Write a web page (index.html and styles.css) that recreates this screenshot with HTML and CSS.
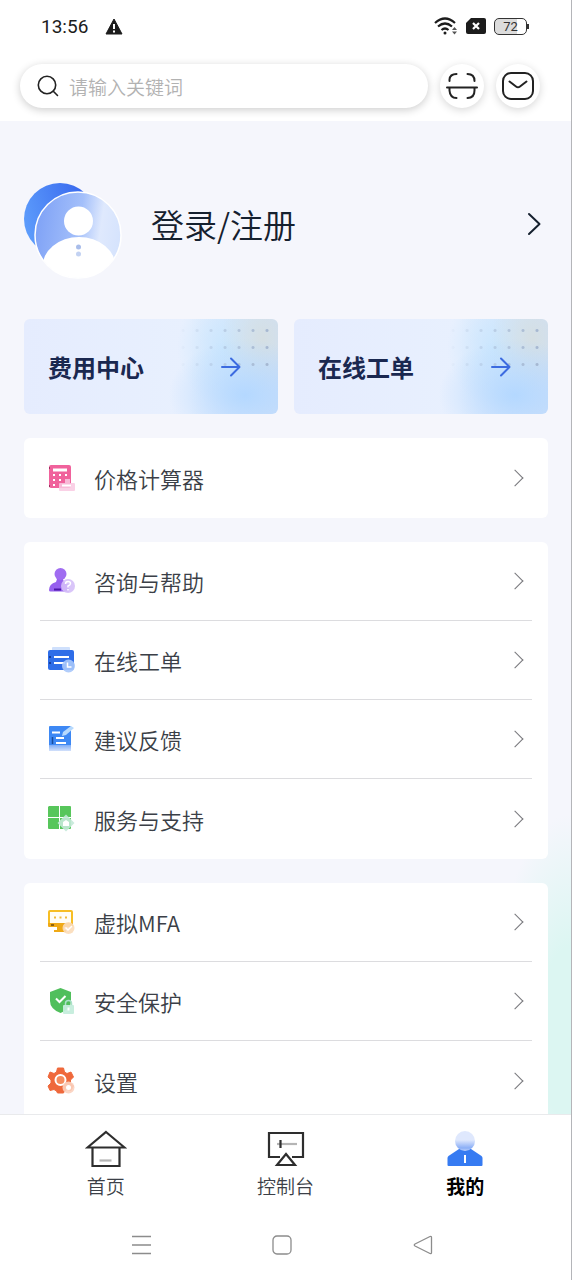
FILE: index.html
```html
<!DOCTYPE html>
<html lang="zh-CN">
<head>
    <meta charset="UTF-8">
    <meta name="viewport" content="width=device-width, initial-scale=1.0">
    <title>我的</title>
    <link rel="stylesheet" href="styles.css">
</head>
<body>
    <header class="header">
        <div class="status-bar">
            <span class="time">13:56</span>
            <svg class="warning" width="18" height="17" viewBox="0 0 18 17">
                <path d="M9 1L17 16H1z" fill="#1c1c1c" stroke="#1c1c1c" stroke-linejoin="round"/>
                <path d="M9 6v5M9 12.500v2" stroke="#fff" stroke-width="2"/>
            </svg>
            <div class="status-icons">
                <svg width="24" height="18" viewBox="0 0 24 18" fill="none" stroke="#1c1c1c" stroke-width="2.200">
                    <path d="M1 6Q11 -3 21 6M4 9.500Q11 3.500 18 9.500M7.500 13Q11 10 14.500 13"/>
                    <circle cx="11" cy="16" r="1.500" fill="#1c1c1c" stroke="none"/>
                    <path d="M18 13l2.500-3 2.500 3zM18 14.500l2.500 3 2.500-3z" fill="#555" stroke="none"/>
                </svg>
                <svg width="20" height="16" viewBox="0 0 20 16">
                    <path d="M5 0h13q2 0 2 2v12q0 2-2 2H2q-2 0-2-2V5z" fill="#1c1c1c"/>
                    <path d="M7 5l6 6M13 5l-6 6" stroke="#fff" stroke-width="2.200"/>
                </svg>
                <div class="battery">72</div>
            </div>
        </div>
        <div class="search-bar">
            <label class="search">
                <svg width="22" height="22" viewBox="0 0 22 22" fill="none" stroke="#222" stroke-width="1.600" stroke-linecap="round">
                    <circle cx="10" cy="10" r="8.700"/>
                    <path d="M16.300 16.300L20.500 20.500"/>
                </svg>
                <input type="text" placeholder="请输入关键词" aria-label="搜索">
            </label>
            <button class="round-btn" aria-label="扫一扫">
                <svg width="32" height="32" viewBox="0 0 32 32" fill="none" stroke="#222" stroke-width="2" stroke-linecap="round">
                    <path d="M1 17.500h30M3.500 11V9.500Q4 4 10.500 4M21.500 4Q28.500 4 28.500 11M3.500 18v2.500Q4 28 10.500 28M21.500 28Q28.500 28 28.500 20.500V18"/>
                </svg>
            </button>
            <button class="round-btn" aria-label="消息">
                <svg width="32" height="32" viewBox="0 0 32 32" fill="none" stroke="#222" stroke-width="2" stroke-linecap="round" stroke-linejoin="round">
                    <rect x="1" y="3" width="30" height="26" rx="8"/>
                    <path d="M7.500 11.500l6.500 5q2 1.500 4 0l6.500-5"/>
                </svg>
            </button>
        </div>
    </header>

    <main class="content">
        <a class="profile" href="#">
            <svg width="100" height="98" viewBox="0 0 100 98">
                <defs>
                    <linearGradient id="back" x1="0" y1="0.500" x2="1" y2="0.200">
                        <stop offset="0" stop-color="#5c9bfb"/>
                        <stop offset="1" stop-color="#3361ec"/>
                    </linearGradient>
                    <linearGradient id="face" x1="0" y1="0.400" x2="1" y2="0.550">
                        <stop offset="0" stop-color="#7fa2f6"/>
                        <stop offset="0.500" stop-color="#a3bffa"/>
                        <stop offset="0.750" stop-color="#dfe9fd"/>
                        <stop offset="1" stop-color="#d5e3fd"/>
                    </linearGradient>
                    <clipPath id="round"><circle cx="54" cy="53" r="43"/></clipPath>
                </defs>
                <circle cx="36" cy="37" r="36" fill="url(#back)"/>
                <circle cx="54" cy="53" r="43" fill="url(#face)"/>
                <ellipse cx="55" cy="86" rx="37" ry="31" fill="#fff" clip-path="url(#round)"/>
                <circle cx="54" cy="53" r="43" fill="none" stroke="#fff" stroke-width="1.500"/>
                <circle cx="54.500" cy="39" r="14.500" fill="#fff"/>
                <circle cx="54.500" cy="65" r="2.500" fill="#a9bdea"/>
                <circle cx="54.500" cy="72" r="2.500" fill="#c3d2f2"/>
            </svg>
            <div class="profile-text">
                <span>登录/注册</span>
                <svg width="14" height="24" viewBox="0 0 14 24" fill="none" stroke="#15202e" stroke-width="2" stroke-linecap="round" stroke-linejoin="round">
                    <path d="M2 2l10.500 10L2 22"/>
                </svg>
            </div>
        </a>

        <div class="promos">
            <a class="promo" href="#">
                <span>费用中心</span>
                <svg width="20" height="20" viewBox="0 0 20 20" fill="none" stroke="#3c6be0" stroke-width="2" stroke-linecap="round" stroke-linejoin="round">
                    <path d="M1 10h17M10 1.500l8.500 8.500-8.500 8.500"/>
                </svg>
            </a>
            <a class="promo" href="#">
                <span>在线工单</span>
                <svg width="20" height="20" viewBox="0 0 20 20" fill="none" stroke="#3c6be0" stroke-width="2" stroke-linecap="round" stroke-linejoin="round">
                    <path d="M1 10h17M10 1.500l8.500 8.500-8.500 8.500"/>
                </svg>
            </a>
        </div>

        <div class="card">
            <a class="row" href="#">
                <svg width="28" height="28" viewBox="0 0 28 28">
                    <rect x="2" y="1" width="22" height="23" rx="2" fill="#f0629c"/>
                    <path d="M6 6h14" stroke="#fff" stroke-width="3"/>
                    <path d="M6 11h2M12 11h2M18 11h2M6 16h2M12 16h2M6 21h2" stroke="#fff" stroke-width="2"/>
                    <path d="M2.500 3v2M2.500 21v2" stroke="#9e2f60"/>
                    <path d="M18 15h5v4h4q1 0 1 1v6q0 1-1 1H13q-1 0-1-1v-6q0-1 1-1h5z" fill="#f9c9e2" fill-opacity="0.850"/>
                    <path d="M15 21.500h9" stroke="#fff" stroke-width="2"/>
                </svg>
                <span>价格计算器</span>
                <i class="arrow"></i>
            </a>
        </div>

        <div class="card">
            <a class="row" href="#">
                <svg width="28" height="28" viewBox="0 0 28 28">
                    <path d="M10 12L9 15Q2 17 2 23q0 1.500 1.500 1.500H22V18l-5-3-1-3z" fill="#9660ee"/>
                    <circle cx="13.500" cy="7" r="6" fill="#a06cf1"/>
                    <path d="M7 22.500h7" stroke="#4c16a8" stroke-width="2"/>
                    <circle cx="21" cy="19" r="7" fill="#d5bff8" fill-opacity="0.900"/>
                    <path d="M18.500 17q0-2.500 2.500-2.500t2.500 2q0 1.500-2.500 2.500v1.500M21 22v1.500" fill="none" stroke="#fff" stroke-width="1.500"/>
                </svg>
                <span>咨询与帮助</span>
                <i class="arrow"></i>
            </a>
            <a class="row" href="#">
                <svg width="28" height="28" viewBox="0 0 28 28">
                    <rect x="5" y="1" width="18" height="6" rx="1" fill="#cfe0fc"/>
                    <rect x="1" y="4" width="26" height="20" rx="2" fill="#2e6de8"/>
                    <path d="M7 11h15M7 17h11" stroke="#fff" stroke-width="2"/>
                    <path d="M2 11h2M2 17h2" stroke="#173f9b" stroke-width="2"/>
                    <circle cx="21.500" cy="20" r="6.500" fill="#a9c8fb" fill-opacity="0.900"/>
                    <path d="M20.500 16.500V21h4" fill="none" stroke="#fff" stroke-width="1.500"/>
                </svg>
                <span>在线工单</span>
                <i class="arrow"></i>
            </a>
            <a class="row" href="#">
                <svg width="28" height="28" viewBox="0 0 28 28">
                    <defs>
                        <linearGradient id="fade" x1="0" y1="0" x2="0" y2="1">
                            <stop offset="0" stop-color="#7fadf6"/>
                            <stop offset="1" stop-color="#d3e1fb"/>
                        </linearGradient>
                    </defs>
                    <rect x="2" y="1" width="22" height="21" rx="1" fill="#3d88f4"/>
                    <path d="M2 20h22v6H2z" fill="url(#fade)"/>
                    <path d="M5 7.500h8M9 13h8M9 18h10" stroke="#fff" stroke-width="2"/>
                    <path d="M5.500 12v7" stroke="#174c9f" stroke-width="1.500"/>
                    <path d="M15 11l1-4 8-6 3 2-8 7z" fill="#b6d9fd"/>
                </svg>
                <span>建议反馈</span>
                <i class="arrow"></i>
            </a>
            <a class="row" href="#">
                <svg width="28" height="28" viewBox="0 0 28 28">
                    <path d="M2 1h10v11H1V2zM13 1h10q1 0 1 1v10H13zM1 13h11v11H2q-1 0-1-1zM13 13h11v10q0 1-1 1H13z" fill="#57c65b"/>
                    <path d="M19 9.500l8.500 8.500-8.500 8.500L10.500 18z" fill="#c4e9d8" fill-opacity="0.900"/>
                    <path d="M16 21v-4l3-2 3 2v4z" fill="#fff"/>
                </svg>
                <span>服务与支持</span>
                <i class="arrow"></i>
            </a>
        </div>

        <div class="card">
            <a class="row" href="#">
                <svg width="28" height="28" viewBox="0 0 28 28">
                    <rect x="2" y="3" width="23" height="14" rx="1" fill="#fffdf4" stroke="#f7be24" stroke-width="2"/>
                    <path d="M1 15h25v3q0 1-1 1H2q-1 0-1-1z" fill="#efa916"/>
                    <path d="M10 19h7v3h2v2H7v-2h3z" fill="#efa916"/>
                    <path d="M7 9.500h2M12.500 9.500h2M18 9.500h2" stroke="#f1bb38" stroke-width="2"/>
                    <path d="M4 17h3" stroke="#6c4b0e" stroke-width="1.500"/>
                    <circle cx="21.500" cy="20" r="6" fill="#fbdcb9" fill-opacity="0.900"/>
                    <path d="M18.500 19.500l2.500 2.500 4-4" fill="none" stroke="#fff" stroke-width="1.500"/>
                </svg>
                <span>虚拟MFA</span>
                <i class="arrow"></i>
            </a>
            <a class="row" href="#">
                <svg width="28" height="28" viewBox="0 0 28 28">
                    <path d="M13.500 1L24 5v9q0 8-10.500 12Q3 22 3 14V5z" fill="#50bf5c"/>
                    <path d="M9 11.500l3.500 3.500 6-6" fill="none" stroke="#fff" stroke-width="2"/>
                    <path d="M18.500 19v-2.500q0-3 3-3t3 3V19" fill="none" stroke="#abe0ca" stroke-width="1.500"/>
                    <rect x="16" y="18" width="11" height="9" rx="1" fill="#c5eddc" fill-opacity="0.950"/>
                    <path d="M21.500 20.500v3" stroke="#fff" stroke-width="2"/>
                </svg>
                <span>安全保护</span>
                <i class="arrow"></i>
            </a>
            <a class="row" href="#">
                <svg width="28" height="28" viewBox="0 0 28 28">
                    <path d="M10.500 1h6l1 4 2.500 1.500 4-1.500 2.500 5-3 3v3l3 3-2.500 4.500-4-1-2.500 1.500-1 2h-6l-1-2-2.500-1.500-4 1L1 19l3-3v-3l-3-3L3 5l4 1.500L9.500 5z" fill="#ef683b" stroke="#ef683b" stroke-linejoin="round"/>
                    <circle cx="13.500" cy="13" r="5" fill="#f58b5d" stroke="#fff" stroke-width="2"/>
                    <circle cx="21.500" cy="20.500" r="6" fill="#fbd2bf" fill-opacity="0.900"/>
                    <circle cx="21.500" cy="20.500" r="2.500" fill="#fff"/>
                </svg>
                <span>设置</span>
                <i class="arrow"></i>
            </a>
        </div>
    </main>

    <footer class="footer">
        <nav class="tabs">
            <a class="tab" href="#">
                <svg width="42" height="38" viewBox="0 0 42 38" fill="none" stroke="#2e2e2e" stroke-width="2.200">
                    <path d="M21 2L39.500 17.500H2.500zM7.500 18v18h27V18"/>
                    <path d="M14.500 30.500h12" stroke="#b5b5b5"/>
                </svg>
                <span>首页</span>
            </a>
            <a class="tab" href="#">
                <svg width="42" height="38" viewBox="0 0 42 38" fill="none" stroke="#2e2e2e" stroke-width="2.200">
                    <path d="M15 27H4V3h34v24H27M21 24l9 11H12z"/>
                    <path d="M12 14h20" stroke="#b5b5b5"/>
                    <path d="M15.500 10v8"/>
                </svg>
                <span>控制台</span>
            </a>
            <a class="tab active" href="#">
                <svg width="42" height="38" viewBox="0 0 42 38">
                    <defs>
                        <linearGradient id="head" x1="0" y1="0" x2="0" y2="1">
                            <stop offset="0.450" stop-color="#dfe8fd"/>
                            <stop offset="0.850" stop-color="#8aaef6"/>
                            <stop offset="1" stop-color="#bdd1fb"/>
                        </linearGradient>
                    </defs>
                    <path d="M15 19h12l10.500 7q1 1 1 2v7q0 1-1 1h-33q-1 0-1-1v-7q0-1 1-2z" fill="#367bf2"/>
                    <circle cx="21" cy="11" r="10" fill="url(#head)"/>
                    <path d="M21 25v8" stroke="#fff" stroke-width="2"/>
                </svg>
                <span>我的</span>
            </a>
        </nav>
        <div class="system-nav">
            <button aria-label="菜单">
                <svg width="20" height="20" viewBox="0 0 20 20" fill="none" stroke="#8c8c8c" stroke-width="1.300">
                    <path d="M1 1.500h19M1 10h19M1 18.500h19"/>
                </svg>
            </button>
            <button aria-label="主屏幕">
                <svg width="20" height="20" viewBox="0 0 20 20" fill="none" stroke="#8c8c8c" stroke-width="1.300">
                    <rect x="1" y="1" width="18" height="18" rx="4"/>
                </svg>
            </button>
            <button aria-label="返回">
                <svg width="20" height="20" viewBox="0 0 20 20" fill="none" stroke="#8c8c8c" stroke-width="1.300" stroke-linejoin="round">
                    <path d="M17 1.500q1.500-.5 1.500 1v15q0 1.500-1.500 1L2 11q-1.500-1 0-2z"/>
                </svg>
            </button>
        </div>
    </footer>
</body>
</html>
```
FILE: styles.css
```css
* {
    margin: 0;
    padding: 0;
    box-sizing: border-box;
}

body {
    display: flex;
    flex-direction: column;
    height: 100vh;
    overflow: hidden;
    background: #fff;
    border-right: 1px solid #b4b5b9;
    color: #3b3f47;
    font-family: "Noto Sans CJK SC", sans-serif;
}

a {
    color: inherit;
    text-decoration: none;
}

button {
    border: none;
    background: none;
    cursor: pointer;
}

svg {
    display: block;
    flex-shrink: 0;
}

/* header */
.header {
    padding: 14px 31px 13px 20px;
}

.status-bar {
    display: flex;
    align-items: center;
    height: 24px;
    padding: 0 13px 0 21px;
}

.time {
    font-family: Roboto, sans-serif;
    font-size: 19px;
    color: #1c1c1c;
}

.warning {
    margin-left: 17px;
}

.status-icons {
    display: flex;
    align-items: center;
    gap: 8px;
    margin-left: auto;
}

.battery {
    position: relative;
    width: 33px;
    height: 17px;
    border: 1px solid #333;
    border-radius: 5px;
    background: linear-gradient(90deg, #dcdcdc 70%, #fff 70%);
    font-family: Roboto, sans-serif;
    font-size: 13px;
    line-height: 15px;
    text-align: center;
    color: #333;
}

.battery::after {
    content: "";
    position: absolute;
    top: 5px;
    right: -3px;
    width: 2px;
    height: 5px;
    background: #333;
}

.search-bar {
    display: flex;
    gap: 12px;
    margin-top: 26px;
}

.search {
    flex: 1;
    display: flex;
    align-items: center;
    gap: 10px;
    height: 44px;
    padding: 0 17px;
    border-radius: 22px;
    background: #fff;
    box-shadow: 0 2px 8px rgba(0, 0, 0, 0.2);
}

.search input {
    flex: 1;
    min-width: 0;
    border: none;
    outline: none;
    background: none;
    font-family: inherit;
    font-size: 19px;
    font-weight: 350;
}

.search input::placeholder {
    color: #b2b2b2;
}

.round-btn {
    display: flex;
    align-items: center;
    justify-content: center;
    width: 44px;
    height: 44px;
    border-radius: 50%;
    background: #fff;
    box-shadow: 0 2px 8px rgba(0, 0, 0, 0.16);
}

/* content */
.content {
    flex: 1;
    min-height: 0;
    overflow: hidden;
    padding: 0 23px 0 24px;
    background:
        radial-gradient(ellipse 80px 220px at 100% 92%, #dcf6f2 40%, rgba(220, 246, 242, 0)),
        #f5f6fc;
}

.profile {
    display: flex;
    align-items: flex-start;
    padding: 61px 7px 39px 0;
}

.profile-text {
    flex: 1;
    display: flex;
    align-items: center;
    justify-content: space-between;
    height: 84px;
    margin-left: 27px;
    font-size: 33px;
    font-weight: 350;
    color: #15202e;
}

.promos {
    display: flex;
    gap: 16px;
    margin-bottom: 24px;
}

.promo {
    position: relative;
    flex: 1;
    display: flex;
    align-items: center;
    justify-content: space-between;
    height: 95px;
    padding: 0 37px 0 24px;
    border-radius: 6px;
    background:
        radial-gradient(ellipse 76px 56px at 87% 80%, #b4d8ff, rgba(180, 216, 255, 0)),
        radial-gradient(ellipse 42px 56px at 94% 20%, #d5dfe3, rgba(213, 223, 227, 0)),
        radial-gradient(ellipse 50px 60px at 80% 30%, #c9e6fe, rgba(201, 230, 254, 0)),
        linear-gradient(90deg, #e5ecfe, #e8f0fe 65%, #cddff9);
    font-size: 24px;
    font-weight: 700;
    color: #1a2850;
}

/* dot grid in the corner */
.promo::before {
    content: "";
    position: absolute;
    top: 3px;
    right: 4px;
    width: 98px;
    height: 51px;
    background: radial-gradient(circle, #a3b5cf 1px, transparent 2px) 0 0 / 14px 17px;
    -webkit-mask-image: linear-gradient(90deg, transparent, #000);
    mask-image: linear-gradient(90deg, transparent, #000);
}

.promo svg {
    z-index: 1;
}

.card {
    margin-bottom: 24px;
    padding: 0 16px 1px;
    border-radius: 6px;
    background: #fff;
}

.row {
    display: flex;
    align-items: center;
    height: 79px;
    padding: 0 11px 0 7px;
    border-bottom: 1px solid #dcdcdf;
    font-size: 22px;
    font-weight: 350;
}

.row:last-child {
    border-bottom: none;
}

.row span {
    flex: 1;
    margin-left: 19px;
}

.arrow {
    width: 12px;
    height: 12px;
    border-top: 1px solid #77777c;
    border-right: 1px solid #77777c;
    transform: rotate(45deg);
}

/* footer */
.footer {
    border-top: 1px solid #e9eaec;
    background: #fff;
}

.tabs {
    display: flex;
    padding: 15px 16px 0;
}

.tab {
    flex: 1;
    display: flex;
    flex-direction: column;
    align-items: center;
    gap: 4px;
    font-size: 19px;
    font-weight: 350;
    line-height: 28px;
}

.tab.active {
    font-weight: 700;
    color: #000;
}

.system-nav {
    display: flex;
    justify-content: center;
    gap: 121px;
    padding: 35px 8px 25px 0;
}
```
